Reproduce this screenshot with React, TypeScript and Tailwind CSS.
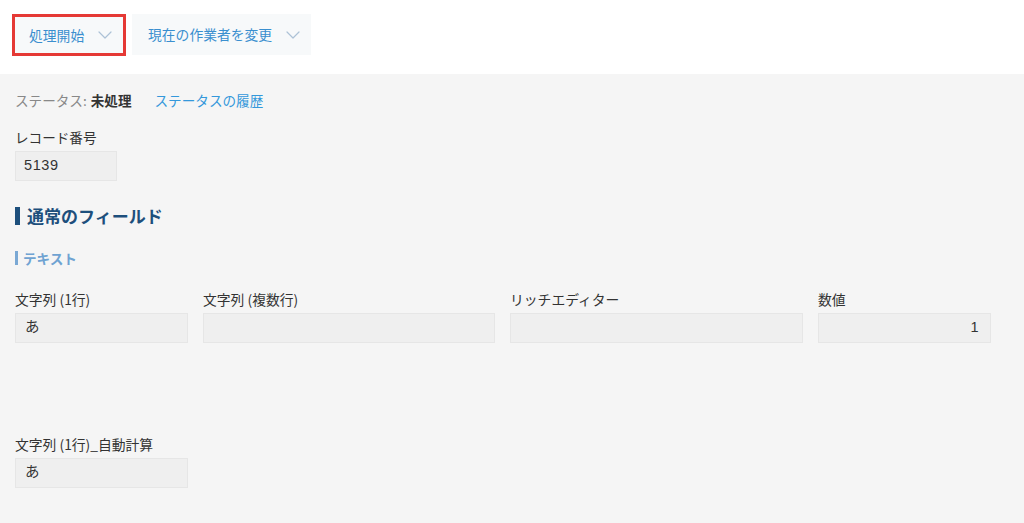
import React from "react";

const Chevron = () => (
  <svg width="14" height="8" viewBox="0 0 14 8" fill="none">
    <path d="M1 1 L7 7 L13 1" stroke="#adc2d6" strokeWidth="1.2" strokeLinecap="round" strokeLinejoin="round" />
  </svg>
);

const valueFont = { fontFamily: '"Liberation Sans", "Noto Sans CJK JP", sans-serif' };

const Field = ({ label, value, w, right }: { label: string; value?: string; w: string; right?: boolean }) => (
  <div className={`flex flex-col ${w}`}>
    <div className="h-[20px] leading-[20px] text-[13.8px] text-[#333]">{label}</div>
    <div
      style={valueFont}
      className={`mt-[4px] h-[30px] border border-[#e6e6e6] bg-[#efefef] flex items-center text-[14.5px] tracking-[0.5px] text-[#333] ${
        right ? "justify-end pr-[11px]" : "pl-[9px]"
      }`}
    >
      {value}
    </div>
  </div>
);

export default function App() {
  return (
    <div
      className="w-[1024px] h-[523px] overflow-hidden bg-[#f5f5f5]"
      style={{ fontFamily: '"Noto Sans CJK JP", "Noto Sans", sans-serif' }}
    >
      <div className="h-[74px] bg-white flex items-start pt-[14px] pl-[12px] gap-[6px]">
        <div className="h-[42px] w-[114px] border-[3px] border-[#e53935] bg-[#f7f9fa] flex items-center pl-[14px] gap-[14px]">
          <span className="text-[13.8px] text-[#3a8fcf]">処理開始</span>
          <Chevron />
        </div>
        <div className="h-[41px] w-[179px] bg-[#f7f9fa] flex items-center pl-[16px] gap-[14px]">
          <span className="text-[13.8px] text-[#3a8fcf]">現在の作業者を変更</span>
          <Chevron />
        </div>
      </div>
      <div className="px-[15px] pt-[16px]">
        <div className="h-[20px] leading-[20px] text-[13.6px] flex items-center">
          <span className="text-[#888]">ステータス:</span>
          <span className="ml-[4px] font-bold text-[#333]">未処理</span>
          <span className="ml-[23px] text-[#3498db]">ステータスの履歴</span>
        </div>
        <div className="mt-[17px] flex flex-col w-[102px]">
          <div className="h-[20px] leading-[20px] text-[13.6px] text-[#333]">レコード番号</div>
          <div
            style={valueFont}
            className="mt-[4px] h-[30px] border border-[#e6e6e6] bg-[#efefef] flex items-center pl-[8px] text-[14.5px] tracking-[0.6px] text-[#333]"
          >
            5139
          </div>
        </div>
        <div className="mt-[23px] h-[24px] flex items-center gap-[7px]">
          <div className="w-[5px] h-[18px] bg-[#1d4f7c]" />
          <span className="text-[17px] font-bold text-[#1d4f7c]">通常のフィールド</span>
        </div>
        <div className="mt-[20px] h-[20px] flex items-center gap-[5px]">
          <div className="w-[3px] h-[14px] bg-[#7aa8d4]" />
          <span className="text-[13.6px] font-bold text-[#6fa3d2]">テキスト</span>
        </div>
        <div className="mt-[21px] flex gap-[15px]">
          <Field label="文字列 (1行)" value="あ" w="w-[173px]" />
          <Field label="文字列 (複数行)" w="w-[292px]" />
          <Field label="リッチエディター" w="w-[293px]" />
          <Field label="数値" value="1" w="w-[173px]" right />
        </div>
        <div className="mt-[91px] flex">
          <Field label="文字列 (1行)_自動計算" value="あ" w="w-[173px]" />
        </div>
      </div>
    </div>
  );
}
